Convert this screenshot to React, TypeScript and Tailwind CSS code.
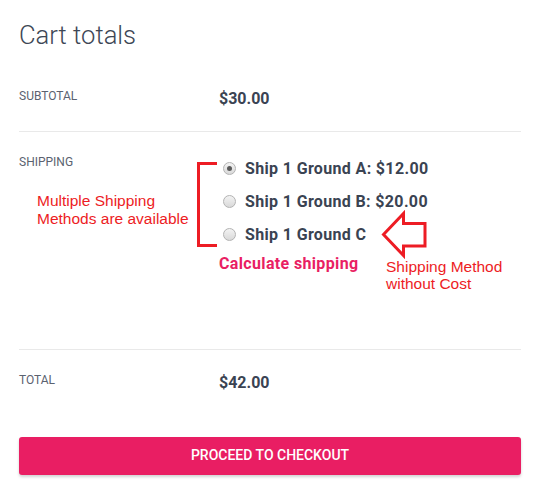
import React from "react"

const options = [
  { id: "a", label: "Ship 1 Ground A: $12.00", checked: true },
  { id: "b", label: "Ship 1 Ground B: $20.00", checked: false },
  { id: "c", label: "Ship 1 Ground C", checked: false },
]

function Radio({ checked }: { checked: boolean }) {
  return (
    <span className="ml-[4px] mr-[9px] flex h-[13px] w-[13px] shrink-0 items-center justify-center rounded-full border border-[#b3b3b3] bg-gradient-to-b from-[#f3f3f3] to-[#d9d9d9]">
      {checked && <span className="h-[5px] w-[5px] rounded-full bg-[#5a5a5a]" />}
    </span>
  )
}

export default function App() {
  return (
    <div
      className="relative min-h-[492px] w-full bg-white px-[19px] pt-[20px]"
      style={{ fontFamily: "Roboto, 'Liberation Sans', sans-serif" }}
    >
      <h2 className="text-[25.6px] font-light leading-[1.2] text-[#3e4756]">Cart totals</h2>

      {/* Subtotal */}
      <div className="mt-[36px] flex items-start border-b border-[#e9e9e9] pb-[20px]">
        <div className="w-[200px] text-[12px] leading-[18px] text-[#5b6270]">SUBTOTAL</div>
        <div className="text-[16px] font-bold leading-[24px] text-[#3a4352]">$30.00</div>
      </div>

      {/* Shipping */}
      <div className="flex items-start border-b border-[#e9e9e9] pb-[73px] pt-[21px]">
        <div className="w-[200px] text-[12px] leading-[18px] text-[#5b6270]">SHIPPING</div>
        <div className="pt-[4px]">
          <ul className="flex flex-col gap-[9px]">
            {options.map((o) => (
              <li key={o.id} className="flex h-[24px] items-center">
                <Radio checked={o.checked} />
                <span className="text-[16px] font-bold leading-[24px] tracking-[0.35px] text-[#3a4352]">
                  {o.label}
                </span>
              </li>
            ))}
          </ul>
          <div className="mt-[5px] text-[16px] font-bold leading-[24px] tracking-[0.35px] text-[#e91e63]">
            Calculate shipping
          </div>
        </div>
      </div>

      {/* Total */}
      <div className="flex items-start pt-[21px]">
        <div className="w-[200px] text-[12px] leading-[18px] text-[#5b6270]">TOTAL</div>
        <div className="text-[16px] font-bold leading-[24px] text-[#3a4352]">$42.00</div>
      </div>

      <button className="mt-[42px] flex h-[38px] w-full items-center justify-center rounded-[3px] bg-[#e91e63] text-[14px] font-medium text-white shadow-[0_2px_3px_rgba(0,0,0,0.18)]">
        PROCEED TO CHECKOUT
      </button>

      {/* Annotations */}
      <div
        className="absolute left-[37px] top-[192px] text-[15.5px] leading-[17.5px] text-[#ed1c24]"
        style={{ fontFamily: "'Liberation Sans', Arial, sans-serif" }}
      >
        Multiple Shipping
        <br />
        Methods are available
      </div>
      <div className="absolute left-[197px] top-[162px] h-[85px] w-[20px] border-y-[3px] border-l-[3px] border-[#ed1c24]" />
      <svg className="absolute left-[380px] top-[210px]" width="50" height="50" viewBox="0 0 50 50">
        <polygon
          points="3.5,24.5 23.5,3.5 23.5,13.5 45,13.5 45,36 23.5,36 23.5,45.5"
          fill="none"
          stroke="#ed1c24"
          strokeWidth="3"
        />
      </svg>
      <div
        className="absolute left-[386px] top-[258px] text-[15.5px] leading-[17px] text-[#ed1c24]"
        style={{ fontFamily: "'Liberation Sans', Arial, sans-serif" }}
      >
        Shipping Method
        <br />
        without Cost
      </div>
    </div>
  )
}
